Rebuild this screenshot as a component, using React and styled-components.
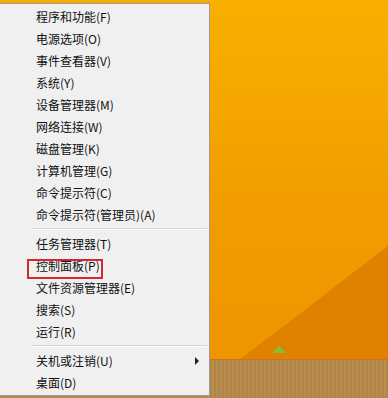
import styled, { createGlobalStyle } from "styled-components";

const MENU_GROUPS = [
  [
    { id: 1, label: "程序和功能(F)" },
    { id: 2, label: "电源选项(O)" },
    { id: 3, label: "事件查看器(V)" },
    { id: 4, label: "系统(Y)" },
    { id: 5, label: "设备管理器(M)" },
    { id: 6, label: "网络连接(W)" },
    { id: 7, label: "磁盘管理(K)" },
    { id: 8, label: "计算机管理(G)" },
    { id: 9, label: "命令提示符(C)" },
    { id: 10, label: "命令提示符(管理员)(A)" },
  ],
  [
    { id: 11, label: "任务管理器(T)" },
    { id: 12, label: "控制面板(P)", marked: true },
    { id: 13, label: "文件资源管理器(E)" },
    { id: 14, label: "搜索(S)" },
    { id: 15, label: "运行(R)" },
  ],
  [
    { id: 16, label: "关机或注销(U)", submenu: true },
    { id: 17, label: "桌面(D)" },
  ],
];

const App = () => {
  return (
    <>
      <GlobalStyle />
      <Desktop>
        <Wallpaper>
          <Dune viewBox="0 0 388 356" preserveAspectRatio="none">
            <path d="M240 356 C 292 318, 340 280, 388 244 L388 356 Z" fill="#e08100" />
            <path d="M272 350 L279 343 L286 350 Z" fill="#7fc03a" />
          </Dune>
        </Wallpaper>
        <Taskbar />
        <Menu>
          {MENU_GROUPS.map((group, i) => (
            <Group key={i}>
              {i > 0 && <Separator />}
              {group.map((item) => (
                <Item key={item.id} $marked={item.marked}>
                  {item.label}
                  {item.submenu && <Arrow />}
                </Item>
              ))}
            </Group>
          ))}
        </Menu>
      </Desktop>
    </>
  );
};

const GlobalStyle = createGlobalStyle`
  body {
    margin: 0;
    overflow: hidden;
    font-family: "Noto Sans CJK SC", "Noto Sans", sans-serif;
  }
`;

const Desktop = styled.div`
  position: relative;
  display: flex;
  flex-direction: column;
  width: 388px;
  height: 398px;
  overflow: hidden;
`;

const Wallpaper = styled.div`
  position: relative;
  flex: 1;
  background: linear-gradient(
    180deg,
    #f8af00 0%,
    #f6a800 25%,
    #f19d00 55%,
    #ee9500 100%
  );
`;

const Dune = styled.svg`
  display: block;
  width: 100%;
  height: 100%;
`;

const Taskbar = styled.div`
  height: 38px;
  border-top: 1px solid #c4791a;
  background-color: #b7894a;
  background-image: repeating-linear-gradient(
    90deg,
    rgba(255, 255, 255, 0.04) 0px,
    rgba(255, 255, 255, 0.04) 2px,
    rgba(0, 0, 0, 0.03) 2px,
    rgba(0, 0, 0, 0.03) 4px
  );
`;

const Menu = styled.div`
  position: absolute;
  left: -1px;
  top: 3px;
  width: 209px;
  height: 389px;
  padding-top: 2px;
  box-sizing: content-box;
  background: #f0f0f0;
  border: 1px solid #9b9b9b;
`;

const Group = styled.div`
  display: flex;
  flex-direction: column;
`;

const Separator = styled.div`
  height: 1px;
  margin: 2px 2px 3px 31px;
  background: #d4d4d4;
  border-bottom: 1px solid #fbfbfb;
`;

const Item = styled.div`
  position: relative;
  display: flex;
  align-items: center;
  height: 22px;
  padding: 0 10px 1px 36px;
  box-sizing: border-box;
  font-size: 12px;
  color: #111;
  white-space: nowrap;

  &::after {
    content: "";
    display: ${(p) => (p.$marked ? "block" : "none")};
    position: absolute;
    left: 27px;
    top: 4px;
    width: 72px;
    height: 16px;
    border: 2px solid #d6262f;
  }
`;

const Arrow = styled.span`
  margin-left: auto;
  width: 0;
  height: 0;
  border-top: 4px solid transparent;
  border-bottom: 4px solid transparent;
  border-left: 4px solid #222;
`;

export default App;
